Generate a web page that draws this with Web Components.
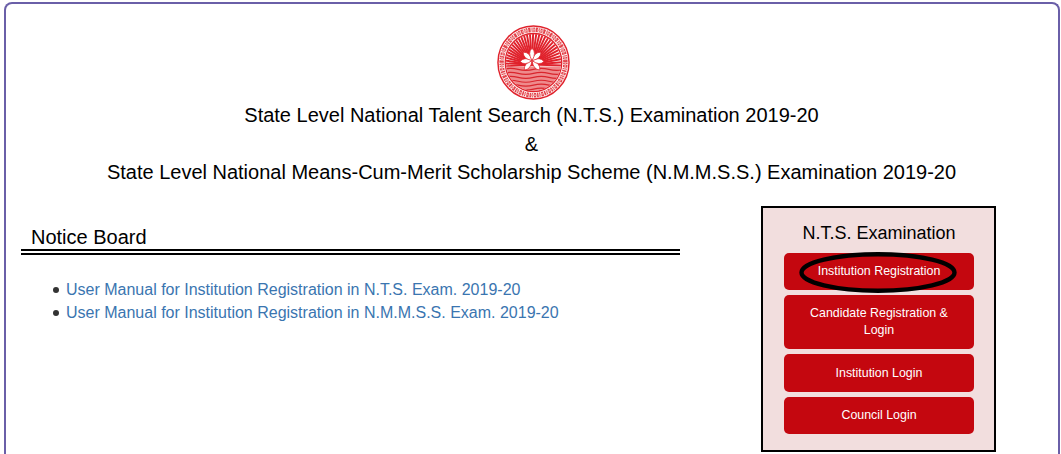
<!DOCTYPE html>
<html>
<head>
<meta charset="utf-8">
<title>N.T.S. Examination</title>
<style>
html, body { margin: 0; height: 454px; overflow: hidden; background: #fff; font-family: "Liberation Sans", Arial, sans-serif; }
</style>
</head>
<body>
<page-frame>
	<exam-header>
		<span slot="first">State Level National Talent Search (N.T.S.) Examination 2019-20</span>
		<span slot="amp">&amp;</span>
		<span slot="second">State Level National Means-Cum-Merit Scholarship Scheme (N.M.M.S.S.) Examination 2019-20</span>
	</exam-header>
	<div style="display:flex; align-items:flex-start">
		<notice-board>
			<notice-link>User Manual for Institution Registration in N.T.S. Exam. 2019-20</notice-link>
			<notice-link>User Manual for Institution Registration in N.M.M.S.S. Exam. 2019-20</notice-link>
		</notice-board>
		<login-panel heading="N.T.S. Examination">
			<panel-button circled>Institution Registration</panel-button>
			<panel-button tall>Candidate Registration &amp; Login</panel-button>
			<panel-button>Institution Login</panel-button>
			<panel-button>Council Login</panel-button>
		</login-panel>
	</div>
</page-frame>
<script>
class PageFrame extends HTMLElement {
	constructor() {
		super();
		this.attachShadow({ mode: "open" });
		// frame runs off the bottom of the shot, so no bottom border
		this.shadowRoot.innerHTML = `<style>
:host {
	display: block;
	box-sizing: border-box;
	margin: 2px 1px 0 4px;
	height: 452px;
	padding: 0 0 0 15px;
	border: 2px solid #6a5fa8;
	border-bottom: 0;
	border-radius: 8px 8px 0 0;
	color: #000;
}
</style><slot></slot>`;
	}
}
customElements.define("page-frame", PageFrame);

class SealLogo extends HTMLElement {
	constructor() {
		super();
		this.attachShadow({ mode: "open" });
		let rays = "";
		for (let a = 176; a <= 364; a += 6) {
			let r = a * Math.PI / 180;
			rays += `<line x1="36.5" y1="40" x2="${36.5 + 36 * Math.cos(r)}" y2="${40 + 36 * Math.sin(r)}"/>`;
		}
		let petals = "";
		for (let a of [-140, 140, -95, 95, -48, 48, 0]) {
			petals += `<path d="M36.5 36Q31.5 28 36.5 23.5Q41.5 28 36.5 36Z" transform="rotate(${a} 36.5 36)"/>`;
		}
		this.shadowRoot.innerHTML = `<style>
:host { display: block; width: 73px; height: 75px; }
svg { display: block; }
</style><svg width="73" height="75" viewBox="0 0 76 76" preserveAspectRatio="none">
<circle cx="38" cy="38" r="37" fill="#fdf3f2" stroke="#e0222c" stroke-width="1.5"/>
<circle cx="38" cy="38" r="33.2" fill="none" stroke="#e2434b" stroke-width="4.6" stroke-dasharray="1.6 .9 2.4 1.1 1 .8"/>
<circle cx="38" cy="38" r="33.2" fill="none" stroke="#f09a9c" stroke-width="1.6" stroke-dasharray="7 3 4 2"/>
<circle cx="38" cy="38" r="29.4" fill="#fff" stroke="#e0222c" stroke-width="1.3"/>
<clipPath id="inner"><circle cx="38" cy="38" r="28.8"/></clipPath>
<g clip-path="url(#inner)">
<g stroke="#e0222c" stroke-width="2">${rays}</g>
<rect x="8" y="42" width="60" height="28" fill="#ee8a8c"/>
<g stroke="#d9252d" stroke-width="1.2" fill="none">
<path d="M6 45q8-2 16 0t16 0 16 0 16 0M6 49q8-2 16 0t16 0 16 0 16 0M6 53q8-2 16 0t16 0 16 0 16 0M6 57q8-2 16 0t16 0 16 0 16 0M6 61q8-2 16 0t16 0 16 0 16 0M6 65q8-2 16 0t16 0 16 0 16 0"/>
</g>
</g>
<g fill="#fff" stroke="#e0222c" stroke-width=".7">${petals}</g>
</svg>`;
	}
}
customElements.define("seal-logo", SealLogo);

class ExamHeader extends HTMLElement {
	constructor() {
		super();
		this.attachShadow({ mode: "open" });
		this.shadowRoot.innerHTML = `<style>
:host {
	display: flex;
	flex-direction: column;
	align-items: center;
	padding: 21px 0 0 0;
	margin-left: -16px;
	font-size: 20px;
	line-height: 28.6px;
}
seal-logo { margin: 0 0 1px 4px; }
.line { white-space: nowrap; height: 28.6px; }
</style><seal-logo></seal-logo>
<div class="line"><slot name="first"></slot></div>
<div class="line"><slot name="amp"></slot></div>
<div class="line"><slot name="second"></slot></div>`;
	}
}
customElements.define("exam-header", ExamHeader);

class NoticeBoard extends HTMLElement {
	constructor() {
		super();
		this.attachShadow({ mode: "open" });
		this.shadowRoot.innerHTML = `<style>
:host { display: block; width: 659px; margin-top: 37px; flex: none; }
h3 {
	margin: 0;
	padding: 0 0 0 10px;
	font-size: 20px;
	font-weight: normal;
	line-height: 27px;
	height: 25px;
	border-bottom: 6px double #000;
}
ul { margin: 23px 0 0 0; padding: 0 0 0 32px; list-style: none; }
</style><h3>Notice Board</h3><ul><slot></slot></ul>`;
	}
}
customElements.define("notice-board", NoticeBoard);

class NoticeLink extends HTMLElement {
	constructor() {
		super();
		this.attachShadow({ mode: "open" });
		this.shadowRoot.innerHTML = `<style>
:host { display: flex; align-items: center; font-size: 16px; line-height: 23px; }
:host::before {
	content: "";
	width: 6px;
	height: 6px;
	margin: 2px 7px 0 0;
	border-radius: 50%;
	background: #333;
}
a { color: #3a75b0; text-decoration: none; }
</style><a href="#"><slot></slot></a>`;
	}
}
customElements.define("notice-link", NoticeLink);

class LoginPanel extends HTMLElement {
	static get observedAttributes() {
		return ["heading"];
	}
	constructor() {
		super();
		this.attachShadow({ mode: "open" });
		this.shadowRoot.innerHTML = `<style>
:host {
	display: block;
	flex: none;
	box-sizing: border-box;
	width: 235px;
	height: 246px;
	margin: 19px 0 0 81px;
	padding: 13px 20px 0 21px;
	border: 2px solid #000;
	background: #f2dede;
}
h4 {
	margin: 0 0 8px;
	font-size: 18px;
	font-weight: normal;
	line-height: 24px;
	text-align: center;
}
#list { display: flex; flex-direction: column; gap: 5px; }
</style><h4 id="title"></h4><div id="list"><slot></slot></div>`;
	}
	attributeChangedCallback(name, oldval, newval) {
		this.shadowRoot.querySelector("#title").textContent = newval;
	}
}
customElements.define("login-panel", LoginPanel);

class PanelButton extends HTMLElement {
	constructor() {
		super();
		this.attachShadow({ mode: "open" });
		this.shadowRoot.innerHTML = `<style>
:host {
	display: flex;
	position: relative;
	box-sizing: border-box;
	width: 190px;
	height: 37.5px;
	padding: 0 20px;
	align-items: center;
	justify-content: center;
	text-align: center;
	background: #c4070f;
	border-radius: 5px;
	color: #fff;
	font-size: 12.4px;
	line-height: 17px;
	cursor: pointer;
}
:host([tall]) { height: 54px; }
svg { display: none; position: absolute; left: 15px; top: -1px; }
:host([circled]) svg { display: block; }
</style><span><slot></slot></span><svg width="158" height="41" viewBox="0 0 158 41"><ellipse cx="79" cy="20.5" rx="76.5" ry="18.2" fill="none" stroke="#000" stroke-width="4.4"/></svg>`;
	}
}
customElements.define("panel-button", PanelButton);
</script>
</body>
</html>
